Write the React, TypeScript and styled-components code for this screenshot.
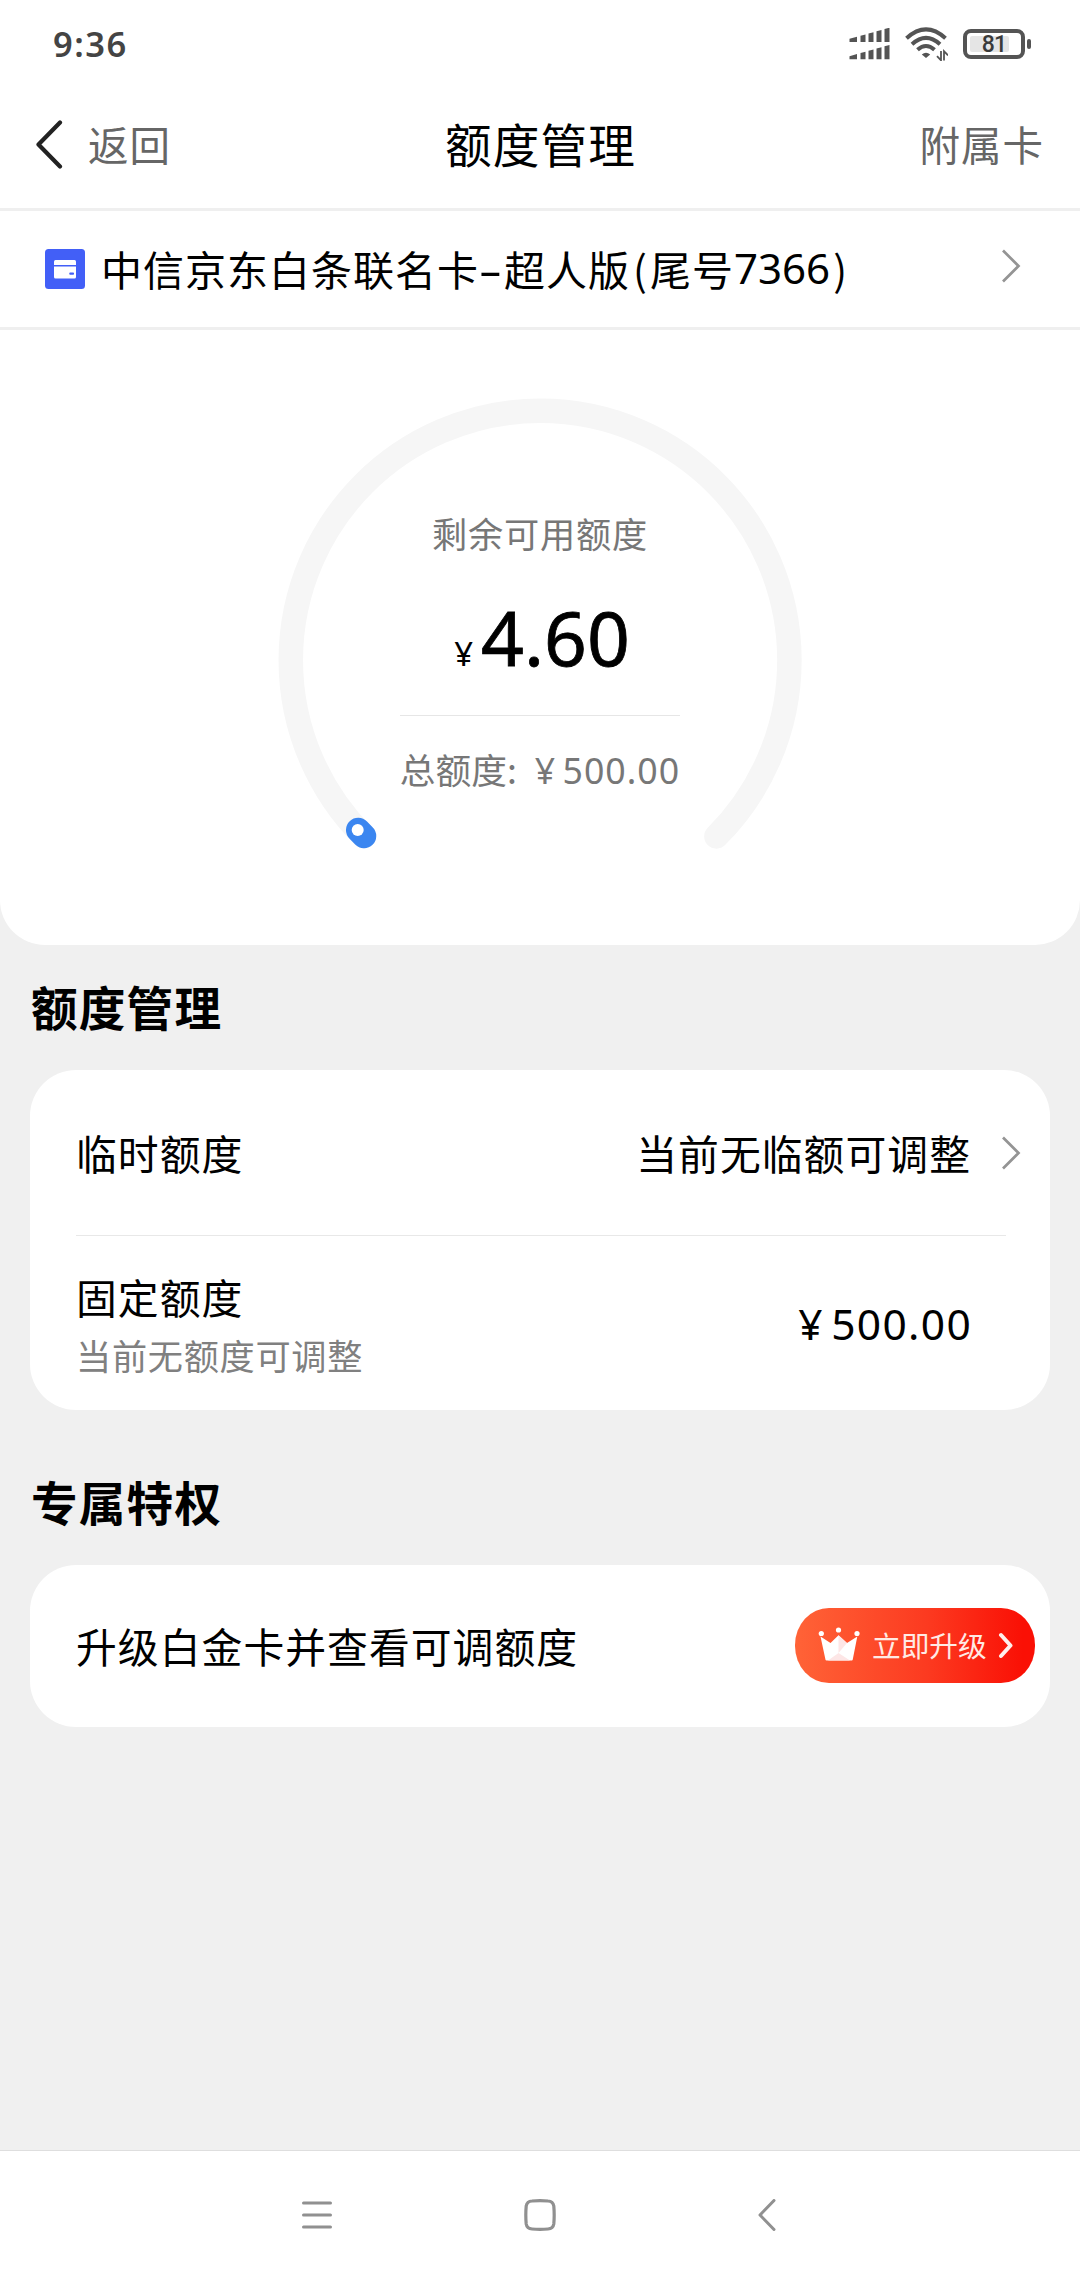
import React from "react";
import styled, { createGlobalStyle } from "styled-components";

const CJK = `"Noto Sans CJK SC", "Noto Sans", sans-serif`;
const LATIN = `"Noto Sans", "Noto Sans CJK SC", sans-serif`;

const GlobalStyle = createGlobalStyle`
  *, *::before, *::after { box-sizing: border-box; }
  body { margin: 0; background: #f0f0f0; }
  svg { display: block; flex: none; }
`;

const Screen = styled.div`
  display: flex;
  flex-direction: column;
  width: 1080px;
  height: 2280px;
  overflow: hidden;
  background: #f0f0f0;
  color: #000;
  font-family: ${CJK};
  white-space: nowrap;
`;

const StatusBar = styled.header`
  display: flex;
  align-items: center;
  flex: none;
  height: 80px;
  padding: 8px 49px 0 53px;
  background: #fff;
`;

const Clock = styled.time`
  flex: 1;
  font: 600 34.5px/40px ${LATIN};
  letter-spacing: 1.5px;
  color: #444;
`;

const Battery = styled.div`
  display: flex;
  align-items: center;
  margin-left: 15px;
`;

const BatteryShell = styled.div`
  display: flex;
  width: 62px;
  height: 30px;
  padding: 3px;
  border: 4px solid #545454;
  border-radius: 8px;
`;

const BatteryLevel = styled.div`
  display: flex;
  align-items: center;
  justify-content: flex-end;
  width: 39px;
  padding: 2px 3px 0 0;
  border-radius: 2px;
  background: #e5e5e5;
  font: 500 23px/16px Roboto, sans-serif;
  letter-spacing: -1px;
  color: #3a3a3a;
`;

const BatteryTip = styled.div`
  width: 4px;
  height: 10px;
  margin-left: 2px;
  border-radius: 2px;
  background: #545454;
`;

const TitleBar = styled.nav`
  display: grid;
  grid-template-columns: 1fr auto 1fr;
  align-items: center;
  flex: none;
  height: 131px;
  padding: 0 36px 0 35px;
  border-bottom: 3px solid #efefef;
  background: #fff;
`;

const NavAction = styled.div<{ $end?: boolean }>`
  display: flex;
  align-items: center;
  justify-content: ${(p) => (p.$end ? "flex-end" : "flex-start")};
  gap: 25px;
  font-size: 40.5px;
  letter-spacing: 1px;
  line-height: 60px;
  color: #666;
`;

const PageTitle = styled.h1`
  margin: 0 0 2px 2px;
  font-size: 46.6px;
  font-weight: 400;
  letter-spacing: 1.2px;
  line-height: 70px;
`;

const CardPicker = styled.div`
  display: flex;
  align-items: center;
  flex: none;
  height: 119px;
  padding: 0 59px 0 45px;
  border-bottom: 3px solid #efefef;
  background: #fff;
`;

const CardName = styled.div`
  display: flex;
  align-items: center;
  flex: 1;
  margin: 0 0 2px 16px;
  font-size: 41px;
  letter-spacing: 1px;
  line-height: 60px;
`;

const Dash = styled.span`
  width: 25px;
  font-family: ${LATIN};
  letter-spacing: 0;
  text-align: center;
  transform: translate(-1px, 2px) scaleX(1.8);
`;

const Paren = styled.span`
  width: 20px;
  letter-spacing: 0;
  text-align: center;
`;

const Digits = styled.span`
  font-family: ${LATIN};
  font-size: 42px;
  letter-spacing: 0;
`;

const ChevronSlot = styled.div<{ $lift?: number }>`
  margin-bottom: ${(p) => p.$lift ?? 0}px;
`;

const LimitPanel = styled.section`
  display: flex;
  justify-content: center;
  align-items: flex-start;
  flex: none;
  height: 615px;
  padding-top: 68px;
  border-radius: 0 0 45px 45px;
  background: #fff;
`;

const Gauge = styled.div`
  display: grid;
  width: 524px;
  height: 452px;

  > * { grid-area: 1 / 1; }
`;

const GaugeText = styled.div`
  display: flex;
  flex-direction: column;
  align-items: center;
  padding-top: 110px;
`;

const GaugeLabel = styled.div`
  font-size: 35.2px;
  letter-spacing: 0.8px;
  line-height: 50px;
  color: #777;
`;

const Available = styled.div`
  display: flex;
  align-items: baseline;
  gap: 8px;
  height: 90px;
  margin: 34px 0 0 4px;
  font: 400 75px/90px ${LATIN};
  -webkit-text-stroke: 0.8px #000;
`;

const SmallYen = styled.span`
  font-size: 33px;
  line-height: 1;
  -webkit-text-stroke: 0;
`;

const GaugeRule = styled.div`
  width: 280px;
  height: 1px;
  margin: 33px 0 28px;
  background: #e6e6e6;
`;

const Total = styled.div`
  display: flex;
  align-items: baseline;
  font-size: 35.7px;
  line-height: 50px;
  color: #777;
`;

const TotalValue = styled.span`
  margin-left: 18px;
  font-family: ${LATIN};
  letter-spacing: 1px;
  word-spacing: -4px;
`;

const SectionTitle = styled.h2<{ $top: number }>`
  flex: none;
  margin: ${(p) => p.$top}px 0 0 31px;
  font-size: 46.6px;
  font-weight: 700;
  letter-spacing: 1.2px;
  line-height: 64px;
`;

const Card = styled.section`
  display: flex;
  flex-direction: column;
  flex: none;
  margin: 32px 30px 0;
  padding-left: 46px;
  border-radius: 46px;
  background: #fff;
`;

const Row = styled.div<{ $height: number; $right: number }>`
  display: flex;
  align-items: center;
  justify-content: space-between;
  height: ${(p) => p.$height}px;
  padding-right: ${(p) => p.$right}px;
`;

const RowRule = styled.div`
  height: 1px;
  margin-right: 44px;
  background: #e8e8e8;
`;

const RowText = styled.div`
  font-size: 40.8px;
  letter-spacing: 1.05px;
  line-height: 58px;
`;

const RowNote = styled.div`
  font-size: 35.2px;
  letter-spacing: 0.7px;
  line-height: 58px;
  color: #808080;
`;

const RowLabels = styled.div`
  padding-top: 5px;
`;

const RowValue = styled.div`
  display: flex;
  align-items: center;
  gap: 31px;
`;

const Amount = styled.div`
  padding-top: 2px;
  font: 400 42.5px/58px ${LATIN};
  letter-spacing: 1.3px;
  word-spacing: -5px;
`;

const UpgradeButton = styled.button`
  display: flex;
  align-items: center;
  width: 240px;
  height: 75px;
  margin-bottom: 1px;
  padding: 0 22px 0 23px;
  border: 0;
  border-radius: 34px / 37px;
  background: linear-gradient(90deg, #ff6337 0%, #fc3a20 55%, #fa1005 95%);
  font: 400 28.7px/40px ${CJK};
  color: #ffeae4;
`;

const UpgradeText = styled.span`
  flex: 1;
  margin: 0 0 1px 12px;
  text-align: left;
`;

const SystemNav = styled.footer`
  display: flex;
  align-items: center;
  flex: none;
  height: 130px;
  margin-top: auto;
  padding: 0 0 2px 302px;
  border-top: 1px solid #dedede;
  background: #fff;
`;

const HomeSlot = styled.div`
  margin: 0 202px 0 192px;
`;

const SIGNAL_BARS: Array<[number, number]> = [
  [0.5, 8],
  [11.5, 16.5],
  [19.5, 24.5],
  [27.5, 32.5],
  [35.5, 40.5],
];

const SignalRow = ({ base }: { base: number }) => (
  <>
    {SIGNAL_BARS.map(([left, right]) => (
      <polygon
        key={left}
        points={`${left},${base} ${left},${base - 3 - left * 0.28} ${right},${base - 3 - right * 0.28} ${right},${base}`}
      />
    ))}
  </>
);

const SignalIcon = () => (
  <svg width="41" height="32" viewBox="0 0 41 32" fill="#545454">
    <SignalRow base={14} />
    <SignalRow base={31.3} />
  </svg>
);

const Wifi = styled.svg`
  margin-left: 15px;
`;

const WifiIcon = () => (
  <Wifi width="43" height="34" viewBox="0 0 43 34" fill="none" stroke="#545454" strokeWidth="4">
    <path d="M1.5 11.2Q21 -6.5 40.5 11.2" />
    <path d="M7 17.2Q21 4.5 35 17.2" />
    <path d="M12.5 22.8Q21 15.2 29.5 22.8" />
    <path d="M21 31l-4.2-3.6Q21 24 25.2 27.4z" fill="#545454" stroke="none" />
    <path d="M36 24v9.3l-4-4.2M39 33.5v-9.3l4 4.2" strokeWidth="1.8" />
  </Wifi>
);

const BackIcon = () => (
  <svg width="28" height="50" viewBox="0 0 28 50" fill="none" stroke="#222" strokeWidth="4.2" strokeLinecap="round" strokeLinejoin="round">
    <path d="M25 3.5L3.5 25.5L25 47.5" />
  </svg>
);

const BankCardIcon = () => (
  <svg width="40" height="40" viewBox="0 0 40 40">
    <rect width="40" height="40" rx="3.5" fill="#425ff7" />
    <rect x="9" y="11" width="22" height="18.5" rx="1.5" fill="#fff" />
    <rect x="9" y="16" width="22" height="1.5" fill="#425ff7" />
    <rect x="24.3" y="23.5" width="4.7" height="2.2" rx="0.8" fill="#425ff7" />
  </svg>
);

const ChevronIcon = () => (
  <svg width="19" height="34" viewBox="0 0 19 34" fill="none" stroke="#949494" strokeWidth="2.7">
    <path d="M1 1.5L16.5 17L1 32.5" />
  </svg>
);

const Crown = styled.svg`
  margin-top: -3px;
`;

const CrownIcon = () => (
  <Crown width="42" height="34" viewBox="0 0 42 34" fill="#fff">
    <circle cx="3.3" cy="6.5" r="2.6" />
    <circle cx="20.5" cy="3" r="2.6" />
    <circle cx="39" cy="6.5" r="2.6" />
    <path d="M2.5 9.5L12.5 16L20.5 8.2L29 16L39.3 9.5L34.7 32.8Q34.6 33.5 33.8 33.5H8.5Q7.6 33.5 7.5 32.8Z" />
    <path d="M20.5 8.2L29 16L20.5 26L10 33.5H32L20.5 26Z" fill="#fde6e6" />
  </Crown>
);

const GaugeArc = () => (
  <svg width="524" height="452" viewBox="0 0 524 452" fill="none" strokeLinecap="round">
    <path d="M85.8 438.4A249.3 249.3 0 1 1 438.4 438.4" stroke="#f6f6f6" strokeWidth="24.5" />
    <path d="M80.2 432L86 438" stroke="#3b86f0" strokeWidth="24.5" />
    <circle cx="79.7" cy="432" r="6" fill="#fff" />
  </svg>
);

export default function App() {
  return (
    <Screen>
      <GlobalStyle />
      <StatusBar>
        <Clock>9:36</Clock>
        <SignalIcon />
        <WifiIcon />
        <Battery>
          <BatteryShell>
            <BatteryLevel>81</BatteryLevel>
          </BatteryShell>
          <BatteryTip />
        </Battery>
      </StatusBar>

      <TitleBar>
        <NavAction>
          <BackIcon />
          返回
        </NavAction>
        <PageTitle>额度管理</PageTitle>
        <NavAction $end>附属卡</NavAction>
      </TitleBar>

      <CardPicker>
        <BankCardIcon />
        <CardName>
          中信京东白条联名卡<Dash>-</Dash>超人版<Paren>(</Paren>尾号<Digits>7366</Digits>
          <Paren>)</Paren>
        </CardName>
        <ChevronSlot $lift={6}>
          <ChevronIcon />
        </ChevronSlot>
      </CardPicker>

      <LimitPanel>
        <Gauge>
          <GaugeArc />
          <GaugeText>
            <GaugeLabel>剩余可用额度</GaugeLabel>
            <Available>
              <SmallYen>¥</SmallYen>4.60
            </Available>
            <GaugeRule />
            <Total>
              总额度:<TotalValue>¥ 500.00</TotalValue>
            </Total>
          </GaugeText>
        </Gauge>
      </LimitPanel>

      <SectionTitle $top={29}>额度管理</SectionTitle>
      <Card>
        <Row $height={165} $right={29}>
          <RowText>临时额度</RowText>
          <RowValue>
            <RowText>当前无临额可调整</RowText>
            <ChevronIcon />
          </RowValue>
        </Row>
        <RowRule />
        <Row $height={174} $right={78}>
          <RowLabels>
            <RowText>固定额度</RowText>
            <RowNote>当前无额度可调整</RowNote>
          </RowLabels>
          <Amount>¥ 500.00</Amount>
        </Row>
      </Card>

      <SectionTitle $top={59}>专属特权</SectionTitle>
      <Card>
        <Row $height={162} $right={15}>
          <RowText>升级白金卡并查看可调额度</RowText>
          <UpgradeButton>
            <CrownIcon />
            <UpgradeText>立即升级</UpgradeText>
            <svg width="15" height="27" viewBox="0 0 15 27" fill="none" stroke="#fff0ec" strokeWidth="4" strokeLinecap="round" strokeLinejoin="round">
              <path d="M3 3L12.5 13.5L3 24" />
            </svg>
          </UpgradeButton>
        </Row>
      </Card>

      <SystemNav>
        <svg width="30" height="32" viewBox="0 0 30 32" stroke="#909090" strokeWidth="3" strokeLinecap="round">
          <path d="M1.5 4H28.5M1.5 16H28.5M1.5 28H28.5" />
        </svg>
        <HomeSlot>
          <svg width="32" height="32" viewBox="0 0 32 32" fill="none" stroke="#909090" strokeWidth="3.2">
            <path d="M8 2Q16 1.2 24 2Q29 2.3 29.8 7Q30.6 16 29.8 25Q29 29.7 24 30Q16 30.8 8 30Q3 29.7 2.2 25Q1.4 16 2.2 7Q3 2.3 8 2Z" />
          </svg>
        </HomeSlot>
        <svg width="18" height="32" viewBox="0 0 18 32" fill="none" stroke="#909090" strokeWidth="3" strokeLinecap="round" strokeLinejoin="round">
          <path d="M16 1.5L2 16L16 30.5" />
        </svg>
      </SystemNav>
    </Screen>
  );
}
